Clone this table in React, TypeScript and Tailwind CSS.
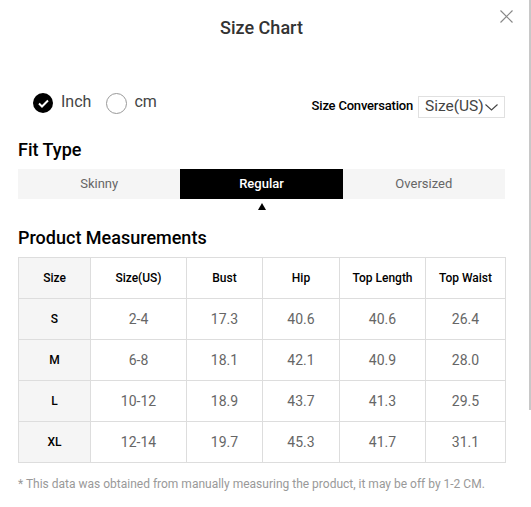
import { useState } from "react";

const rows = [
  ["S", "2-4", "17.3", "40.6", "40.6", "26.4"],
  ["M", "6-8", "18.1", "42.1", "40.9", "28.0"],
  ["L", "10-12", "18.9", "43.7", "41.3", "29.5"],
  ["XL", "12-14", "19.7", "45.3", "41.7", "31.1"],
];

const headers = ["Size", "Size(US)", "Bust", "Hip", "Top Length", "Top Waist"];
const widths = ["w-[72px]", "w-[96px]", "w-[76px]", "w-[77px]", "w-[86px]", "w-[80px]"];
const fits = ["Skinny", "Regular", "Oversized"];

function Radio({ on }: { on: boolean }) {
  return on ? (
    <span className="flex h-[20px] w-[20px] items-center justify-center rounded-full bg-black">
      <svg width="11" height="9" viewBox="0 0 11 9" fill="none" stroke="white" strokeWidth="2">
        <path d="M1 4.5L4 7.5L10 1.5" />
      </svg>
    </span>
  ) : (
    <span className="h-[21px] w-[21px] rounded-full border border-[#999]" />
  );
}

export default function App() {
  const [unit, setUnit] = useState("inch");
  const [fit, setFit] = useState("Regular");

  return (
    <div className="flex w-[531px] min-h-[507px] bg-white font-['Roboto',sans-serif]">
      <div className="w-[529px] pl-[18px]">
        <div className="relative flex h-[54px] w-[487px] items-center justify-center">
          <h2 className="text-[18px] font-medium text-[#333]">Size Chart</h2>
          <button className="absolute right-[-8px] top-[10px] text-[#888]">
            <svg width="13" height="13" viewBox="0 0 13 13" fill="none" stroke="currentColor" strokeWidth="1.2">
              <path d="M0.5 0.5L12.5 12.5M12.5 0.5L0.5 12.5" />
            </svg>
          </button>
        </div>

        <div className="mt-[39px] flex h-[25px] w-[487px] justify-between">
          <div className="flex items-start pl-[15px]">
            <button onClick={() => setUnit("inch")} className="flex items-center gap-[8px]">
              <Radio on={unit === "inch"} />
              <span className="text-[16px] leading-[18px] text-[#444] -mt-[3px]">Inch</span>
            </button>
            <button onClick={() => setUnit("cm")} className="ml-[15px] flex items-center gap-[7px]">
              <Radio on={unit === "cm"} />
              <span className="text-[16px] leading-[18px] text-[#444] -mt-[3px]">cm</span>
            </button>
          </div>
          <div className="flex items-end gap-[5px]">
            <span className="mb-[3px] text-[13px] tracking-[-0.2px] font-medium text-black">Size Conversation</span>
            <div className="flex h-[22px] w-[87px] items-center gap-[1px] border border-[#e0e0e0] pl-[6px]">
              <span className="text-[15.5px] text-[#444]">Size(US)</span>
              <svg width="13" height="7" viewBox="0 0 13 7" fill="none" stroke="#444" strokeWidth="1.1">
                <path d="M0.5 0.5L6.5 6L12.5 0.5" />
              </svg>
            </div>
          </div>
        </div>

        <h3 className="mt-[20px] text-[18px] leading-[24px] font-medium text-black">Fit Type</h3>
        <div className="mt-[7px] flex h-[30px] w-[487px] bg-[#f5f5f5]">
          {fits.map((f) => (
            <button
              key={f}
              onClick={() => setFit(f)}
              className={
                "flex-1 text-[13px] " +
                (fit === f ? "bg-black text-white font-medium" : "text-[#666]")
              }
            >
              {f}
            </button>
          ))}
        </div>
        <div className="flex w-[487px] justify-center pt-[4px]">
          <div className="h-0 w-0 border-l-[4px] border-r-[4px] border-b-[7px] border-l-transparent border-r-transparent border-b-black" />
        </div>

        <h3 className="mt-[16px] text-[18px] leading-[24px] font-medium text-black">Product Measurements</h3>
        <table className="mt-[7px] w-[487px] table-fixed border-collapse border border-[#ddd] text-center">
          <colgroup>
            {widths.map((w, i) => (
              <col key={i} className={w} />
            ))}
          </colgroup>
          <thead>
            <tr className="h-[41px]">
              {headers.map((h, i) => (
                <th
                  key={h}
                  className={
                    "border border-[#ddd] text-[12px] font-medium text-black " +
                    (i === 0 ? "bg-[#f5f5f5]" : "")
                  }
                >
                  {h}
                </th>
              ))}
            </tr>
          </thead>
          <tbody>
            {rows.map((r) => (
              <tr key={r[0]} className="h-[41px]">
                {r.map((c, i) => (
                  <td
                    key={i}
                    className={
                      "border border-[#ddd] " +
                      (i === 0
                        ? "bg-[#f5f5f5] text-[12px] font-medium text-black"
                        : "text-[14px] text-[#666]")
                    }
                  >
                    {c}
                  </td>
                ))}
              </tr>
            ))}
          </tbody>
        </table>

        <p className="mt-[13px] text-[12px] leading-[16px] text-[#999]">
          * This data was obtained from manually measuring the product, it may be off by 1-2 CM.
        </p>
      </div>
      <div className="w-[2px]">
        <div className="h-[410px] w-[2px] bg-[#c8c8c8]" />
      </div>
    </div>
  );
}
